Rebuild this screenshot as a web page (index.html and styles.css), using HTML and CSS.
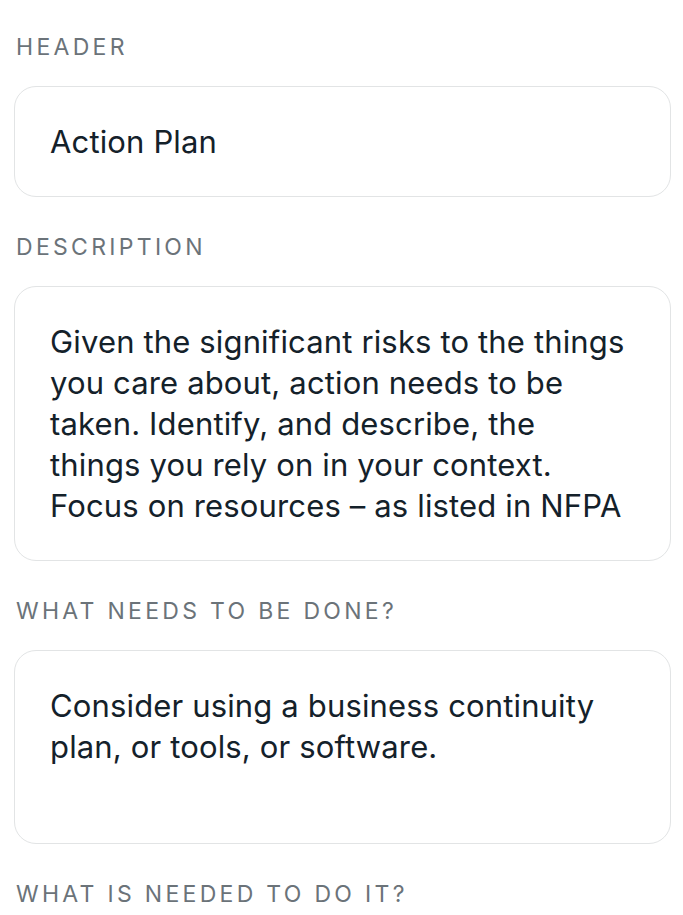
FILE: index.html
```html
<!DOCTYPE html>
<html>
<head>
<meta charset="utf-8">
<link rel="stylesheet" href="styles.css">
</head>
<body>
<main class="form">
  <div class="label">HEADER</div>
  <div class="field">Action Plan</div>
  <div class="label">DESCRIPTION</div>
  <div class="field">Given the significant risks to the things you care about, action needs to be taken. Identify, and describe, the things you rely on in your context. Focus on resources – as listed in NFPA</div>
  <div class="label">WHAT NEEDS TO BE DONE?</div>
  <div class="field tall">Consider using a business continuity plan, or tools, or software.</div>
  <div class="label">WHAT IS NEEDED TO DO IT?</div>
</main>
</body>
</html>
```

FILE: styles.css
```css
html, body {
  margin: 0;
  padding: 0;
  background: #ffffff;
}
.form {
  display: flex;
  flex-direction: column;
  padding: 33px 12px 0 14px;
  font-family: Inter, "Noto Sans", sans-serif;
}
.label {
  font-size: 23px;
  line-height: 28px;
  letter-spacing: 3.3px;
  color: #6b7379;
  padding-left: 2px;
  margin-bottom: 25px;
}
.field {
  border: 1px solid #e2e4e5;
  border-radius: 22px;
  padding: 34px 42px 34px 35px;
  font-size: 31px;
  line-height: 41px;
  letter-spacing: 0.15px;
  color: #14212a;
  margin-bottom: 36px;
}
.field.tall {
  min-height: 124px;
}
```
